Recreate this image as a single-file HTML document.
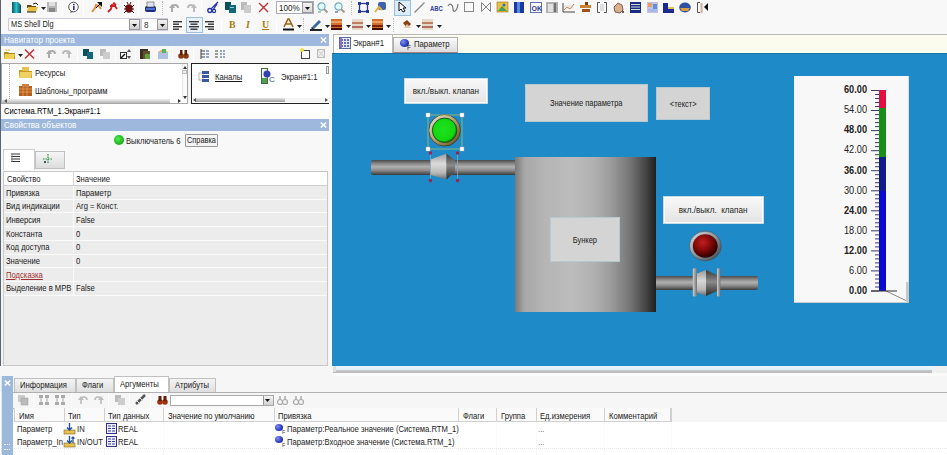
<!DOCTYPE html>
<html><head><meta charset="utf-8">
<style>
*{margin:0;padding:0;box-sizing:border-box}
html,body{width:947px;height:455px;overflow:hidden;background:#f4f4f4;font-family:"Liberation Sans",sans-serif;font-size:8.5px;color:#1a1a1a}
.a{position:absolute}
.t{position:absolute;white-space:nowrap;line-height:10px;height:10px;transform:scaleX(.9);transform-origin:0 0}
.sep{position:absolute;width:1px;background:#c8c8c8;border-right:1px solid #fff}
svg{position:absolute;overflow:visible}
</style></head><body>
<div class="a" style="left:0px;top:0px;width:947px;height:34px;background:#f8f8f8"></div>
<div class="a" style="left:0px;top:0px;width:1px;height:455px;background:#5a6470"></div>
<svg style="left:12px;top:2px" width="9" height="11" viewBox="0 0 9 11"><defs><linearGradient id="gd" x1="0" x2="1"><stop offset="0" stop-color="#0a5a6a"/><stop offset=".5" stop-color="#30c0c8"/><stop offset="1" stop-color="#0a4a5a"/></linearGradient></defs><path d="M0 0h6l3 3v8H0z" fill="url(#gd)"/></svg>
<svg style="left:27px;top:3px" width="11" height="9" viewBox="0 0 11 9"><path d="M0 2h4l1 1h4v2H0z" fill="#6a4a10"/><path d="M1 4h10l-2 5H0z" fill="#e8c040"/><path d="M0 9h9" stroke="#222"/><path d="M6 1l3-1 2 2" stroke="#222" fill="none"/></svg>
<svg style="left:41px;top:7px" width="5" height="3"><path d="M0 0h5l-2.5 3z" fill="#222"/></svg>
<svg style="left:47px;top:2px" width="10" height="10" viewBox="0 0 10 10"><rect x="0" y="0" width="10" height="10" fill="#b8b8b8"/><rect x="2" y="0" width="6" height="4" fill="#e0e0e0"/><rect x="2" y="6" width="6" height="4" fill="#888"/></svg>
<div class="sep" style="left:62px;top:1px;height:14px"></div>
<svg style="left:68px;top:2px" width="11" height="11" viewBox="0 0 11 11"><circle cx="5.5" cy="5" r="4.8" fill="#fafafa" stroke="#555" stroke-width="1"/><path d="M3 9l-1 2 3-1" fill="#555"/><rect x="5" y="4" width="1.6" height="4" fill="#3a2a90"/><circle cx="5.8" cy="2.6" r=".9" fill="#3a2a90"/></svg>
<div class="sep" style="left:83px;top:1px;height:14px"></div>
<svg style="left:90px;top:2px" width="12" height="11" viewBox="0 0 12 11"><path d="M2 10l3-4 1-3 3 1 2 3" stroke="#e09040" stroke-width="2" fill="none"/><path d="M7 0h5v5z" fill="#111"/><path d="M6 6l5-5" stroke="#111"/></svg>
<svg style="left:107px;top:2px" width="11" height="11" viewBox="0 0 11 11"><path d="M1 10l3-3 1-4 3 1 2 3M3 4h4l2-2" stroke="#cc2020" stroke-width="1.8" fill="none"/><circle cx="7" cy="1.5" r="1.3" fill="#cc2020"/></svg>
<svg style="left:124px;top:2px" width="10" height="11" viewBox="0 0 10 11"><ellipse cx="5" cy="6.5" rx="3.6" ry="4.3" fill="#701010"/><path d="M0 3l2 2M10 3l-2 2M0 7h2M8 7h2M0 11l2-2M10 11l-2-2M3 0l1 2M7 0l-1 2" stroke="#401010"/></svg>
<div class="sep" style="left:138px;top:1px;height:14px"></div>
<svg style="left:145px;top:2px" width="11" height="11" viewBox="0 0 11 11"><rect x="0" y="4" width="11" height="6" rx="2" fill="#202a80"/><rect x="2" y="0" width="7" height="5" fill="#e0e0f0" stroke="#555" stroke-width=".6"/><rect x="1" y="6" width="9" height="2" fill="#5070d0"/></svg>
<div class="a" style="left:162px;top:1px;width:1px;height:14px;border-left:1px dotted #bbb"></div>
<svg style="left:169px;top:3px" width="11" height="10" viewBox="0 0 11 10"><path d="M3 9V5a3 3 0 0 1 6 0" stroke="#aaa" stroke-width="2" fill="none"/><path d="M0 5l3-4 3 4z" fill="#aaa"/></svg>
<svg style="left:187px;top:3px" width="10" height="10" viewBox="0 0 10 10"><path d="M1 5a3 3 0 0 1 6 0v4" stroke="#bbb" stroke-width="2" fill="none"/><path d="M4 5l3-4 3 4z" fill="#bbb"/></svg>
<div class="sep" style="left:201px;top:1px;height:14px"></div>
<svg style="left:207px;top:2px" width="12" height="11" viewBox="0 0 12 11"><circle cx="2.8" cy="8.5" r="2" stroke="#2030a0" stroke-width="1.4" fill="none"/><circle cx="7" cy="9" r="1.6" stroke="#2030a0" stroke-width="1.2" fill="none"/><path d="M4 7l7-7M6 8l4-6" stroke="#2838b0" stroke-width="1.3"/></svg>
<svg style="left:225px;top:2px" width="11" height="11" viewBox="0 0 11 11"><rect x="0" y="0" width="6" height="8" fill="#0c4e5a"/><rect x="4" y="3" width="7" height="8" fill="#156878"/><rect x="5" y="5" width="4" height="1" fill="#8cd"/></svg>
<svg style="left:241px;top:2px" width="10" height="11" viewBox="0 0 10 11"><rect x="0" y="0" width="6" height="8" fill="#bbb"/><rect x="3" y="3" width="7" height="8" fill="#ccc"/></svg>
<svg style="left:258px;top:2px" width="11" height="11" viewBox="0 0 11 11"><path d="M1 1l9 9M10 1L1 10" stroke="#c03030" stroke-width="1.4"/></svg>
<div class="sep" style="left:273px;top:1px;height:14px"></div>
<div class="a" style="left:276px;top:1px;width:38px;height:13px;background:#fff;border:1px solid #aab"></div>
<div class="t" style="left:279px;top:3px;font-size:9px">100%</div>
<div class="a" style="left:302px;top:2px;width:11px;height:11px;background:linear-gradient(#f4f4f4,#d8d8d8);border:1px solid #999"></div>
<svg style="left:305px;top:7px" width="5" height="3"><path d="M0 0h5l-2.5 3z" fill="#111"/></svg>
<svg style="left:317px;top:2px" width="11" height="11" viewBox="0 0 11 11"><circle cx="4.5" cy="4.5" r="3.6" fill="#dff" stroke="#7ab" stroke-width="1.2"/><path d="M7 7l3.5 3.5" stroke="#a98" stroke-width="2"/><path d="M1 10h3" stroke="#4a8" stroke-width="1"/></svg>
<svg style="left:334px;top:2px" width="11" height="11" viewBox="0 0 11 11"><circle cx="4.5" cy="4.5" r="3.6" fill="#dff" stroke="#7ab" stroke-width="1.2"/><path d="M7 7l3.5 3.5" stroke="#a98" stroke-width="2"/><path d="M1 10h3" stroke="#257" stroke-width="1"/></svg>
<div class="a" style="left:351px;top:1px;width:1px;height:14px;border-left:1px dotted #bbb"></div>
<svg style="left:358px;top:2px" width="11" height="11" viewBox="0 0 11 11"><rect x="1.5" y="1.5" width="8" height="8" fill="none" stroke="#2a3a9a" stroke-width="1.3"/><path d="M0 0h3v3H0zM8 0h3v3H8zM0 8h3v3H0zM8 8h3v3H8z" fill="#2a3a9a"/></svg>
<svg style="left:375px;top:2px" width="11" height="11" viewBox="0 0 11 11"><rect x="3" y="0" width="8" height="8" rx="2" fill="#4060b0"/><path d="M0 10l4-5 3 3" stroke="#e0b040" stroke-width="2" fill="none"/></svg>
<div class="sep" style="left:390px;top:1px;height:14px"></div>
<div class="a" style="left:394px;top:0px;width:17px;height:16px;background:#dcecf8;border:1px solid #9cc0dc"></div>
<svg style="left:398px;top:2px" width="9" height="11" viewBox="0 0 9 11"><path d="M1 0v9l2-2 2 3 2-1-2-3h3z" fill="#fff" stroke="#111" stroke-width="1"/></svg>
<svg style="left:414px;top:2px" width="11" height="11" viewBox="0 0 11 11"><path d="M0.5 10.5l10-10" stroke="#888" stroke-width="1.2"/></svg>
<div class="t" style="left:430px;top:4px;font-size:7px;font-weight:bold;color:#3040a0;transform:scaleX(.85)">ABC</div>
<svg style="left:447px;top:2px" width="12" height="11" viewBox="0 0 12 11"><path d="M1 4c2-4 5-1 5 3s4 3 5-5" stroke="#777" stroke-width="1.2" fill="none"/></svg>
<svg style="left:464px;top:2px" width="11" height="11" viewBox="0 0 11 11"><rect x=".5" y=".5" width="9" height="9" fill="none" stroke="#888"/></svg>
<svg style="left:481px;top:2px" width="10" height="11" viewBox="0 0 10 11"><path d="M.5 .5v9l9-9v9z" fill="none" stroke="#888"/></svg>
<svg style="left:497px;top:2px" width="11" height="11" viewBox="0 0 11 11"><rect x="0" y="0" width="11" height="10" fill="#e8c040" stroke="#a07010" stroke-width=".6"/><path d="M1 9l4-5 5 5z" fill="#40a060"/><circle cx="7" cy="3" r="1.5" fill="#3070c0"/></svg>
<svg style="left:514px;top:2px" width="10" height="11" viewBox="0 0 10 11"><rect x="0" y="0" width="10" height="11" fill="#1a3aa0"/><rect x="3" y="0" width="3" height="11" fill="#5a8ae0"/></svg>
<svg style="left:530px;top:2px" width="12" height="11" viewBox="0 0 12 11"><rect x=".5" y=".5" width="11" height="10" fill="#f8f8ff" stroke="#6070b0"/><text x="1.5" y="8.5" font-size="7" font-family="Liberation Sans" font-weight="bold" fill="#3040a0">OK</text></svg>
<svg style="left:546px;top:2px" width="12" height="11" viewBox="0 0 12 11"><rect x="0" y="0" width="12" height="11" fill="#b0b0b0"/><rect x="2" y="2" width="5" height="8" fill="#e0e0e0"/><rect x="8" y="1" width="2" height="9" fill="#707070"/></svg>
<svg style="left:563px;top:2px" width="12" height="11" viewBox="0 0 12 11"><path d="M0 10h12M0 1v9" stroke="#444"/><path d="M1 8l3-3 3 2 4-5" stroke="#c07030" fill="none"/><path d="M1 6h10M1 4h10" stroke="#ccc" stroke-width=".6"/></svg>
<svg style="left:580px;top:2px" width="11" height="11" viewBox="0 0 11 11"><rect x="0" y="3" width="11" height="3" fill="#d08030"/><rect x="2" y="7" width="8" height="3" fill="#a05020"/><rect x="5" y="0" width="3" height="3" fill="#704010"/></svg>
<svg style="left:597px;top:2px" width="10" height="11" viewBox="0 0 10 11"><path d="M3 .5H.5v10H3M7 .5h2.5v10H7" stroke="#555" fill="none"/><rect x="3" y="2" width="4" height="7" fill="#ddd"/></svg>
<svg style="left:613px;top:2px" width="12" height="11" viewBox="0 0 12 11"><path d="M2 10l-1-5 4-4 4 2 1 5-3 3z" fill="#d8b090" stroke="#704030" stroke-width=".8"/><circle cx="10" cy="10" r="1" fill="#333"/></svg>
<svg style="left:630px;top:2px" width="11" height="11" viewBox="0 0 11 11"><rect x="0" y="0" width="11" height="11" fill="#1a2a80"/><path d="M1 2.5h9M1 5h9M1 7.5h9" stroke="#cdd" stroke-width="1"/></svg>
<svg style="left:647px;top:2px" width="11" height="11" viewBox="0 0 11 11"><rect x="0" y="0" width="11" height="11" fill="#c8c0e0"/><rect x="1" y="1" width="4" height="4" fill="#e8a060"/><rect x="6" y="2" width="4" height="6" fill="#6090e0"/><rect x="1" y="7" width="9" height="3" fill="#a8b8e8"/></svg>
<svg style="left:663px;top:2px" width="12" height="11" viewBox="0 0 12 11"><path d="M0 1h5v4h6v6H0z" fill="#1a2a90"/><path d="M5 5h6v2H5z" fill="#e0c050"/></svg>
<svg style="left:679px;top:2px" width="12" height="11" viewBox="0 0 12 11"><ellipse cx="6" cy="5.5" rx="5.8" ry="5" fill="#3050a0"/><path d="M1 6h10l-2 3H3z" fill="#d8a040"/></svg>
<svg style="left:697px;top:2px" width="11" height="11" viewBox="0 0 11 11"><path d="M3 .5H.5v10H3" stroke="#555" fill="none"/><path d="M5 1v10M4 1v10" stroke="#c87" stroke-width=".8"/><path d="M11 1L7 5l4 4z" fill="#111"/></svg>
<div class="a" style="left:8px;top:18px;width:133px;height:13px;background:#fff;border:1px solid #ccd"></div>
<div class="t" style="left:11px;top:20px;font-size:8.2px;color:#222">MS Shell Dlg</div>
<div class="a" style="left:129px;top:19px;width:11px;height:11px;background:linear-gradient(#f4f4f4,#d0d0d0);border:1px solid #999"></div>
<svg style="left:132px;top:24px" width="5" height="3"><path d="M0 0h5l-2.5 3z" fill="#111"/></svg>
<div class="a" style="left:141px;top:18px;width:27px;height:13px;background:#fff;border:1px solid #ccd"></div>
<div class="t" style="left:144px;top:20px;font-size:9px;color:#333">8</div>
<div class="a" style="left:157px;top:19px;width:11px;height:11px;background:linear-gradient(#f4f4f4,#d0d0d0);border:1px solid #999"></div>
<svg style="left:160px;top:24px" width="5" height="3"><path d="M0 0h5l-2.5 3z" fill="#111"/></svg>
<svg style="left:173px;top:20px" width="10" height="11" viewBox="0 0 10 11"><rect x="0" y="1.0" width="9" height="1.4" fill="#333"/><rect x="0" y="3.5" width="6" height="1.4" fill="#333"/><rect x="0" y="6.0" width="9" height="1.4" fill="#333"/><rect x="0" y="8.5" width="6" height="1.4" fill="#333"/></svg>
<div class="a" style="left:186px;top:17px;width:17px;height:16px;background:#e8f2fa;border:1px solid #9cc0dc"></div>
<svg style="left:189px;top:20px" width="10" height="11" viewBox="0 0 10 11"><rect x="0" y="1.0" width="10" height="1.4" fill="#333"/><rect x="1.5" y="3.5" width="7" height="1.4" fill="#333"/><rect x="0" y="6.0" width="10" height="1.4" fill="#333"/><rect x="1.5" y="8.5" width="7" height="1.4" fill="#333"/></svg>
<svg style="left:205px;top:20px" width="10" height="11" viewBox="0 0 10 11"><rect x="0" y="1.0" width="9" height="1.4" fill="#333"/><rect x="3" y="3.5" width="6" height="1.4" fill="#333"/><rect x="0" y="6.0" width="9" height="1.4" fill="#333"/><rect x="3" y="8.5" width="6" height="1.4" fill="#333"/></svg>
<div class="sep" style="left:221px;top:18px;height:14px"></div>
<div class="t" style="left:229px;top:19px;font-size:11px;font-weight:bold;color:#b07810;font-family:'Liberation Serif'">B</div>
<div class="t" style="left:246px;top:19px;font-size:11px;font-weight:bold;font-style:italic;color:#b07810;font-family:'Liberation Serif'">I</div>
<div class="t" style="left:262px;top:19px;font-size:11px;font-weight:bold;color:#b07810;font-family:'Liberation Serif';text-decoration:underline">U</div>
<div class="sep" style="left:276px;top:18px;height:14px"></div>
<svg style="left:283px;top:19px" width="11" height="12" viewBox="0 0 11 12"><path d="M1 8L5 0h1l4 8M3 5h5" stroke="#a06010" stroke-width="1.6" fill="none"/><rect x="0" y="9.5" width="11" height="2" fill="#111"/></svg>
<svg style="left:297px;top:25px" width="5" height="3"><path d="M0 0h5l-2.5 3z" fill="#222"/></svg>
<div class="a" style="left:303px;top:18px;width:1px;height:14px;border-left:1px dotted #bbb"></div>
<svg style="left:310px;top:19px" width="12" height="12" viewBox="0 0 12 12"><path d="M2 8l7-7 2 2-7 7z" fill="#3a6aa0"/><path d="M1 9l1-1 2 2-2 0z" fill="#222"/><rect x="0" y="10" width="12" height="2" fill="#222"/></svg>
<svg style="left:325px;top:25px" width="5" height="3"><path d="M0 0h5l-2.5 3z" fill="#222"/></svg>
<svg style="left:331px;top:19px" width="11" height="11" viewBox="0 0 11 11"><rect x="0" y="0" width="11" height="11" fill="#d07030"/><rect x="0" y="2" width="11" height="2" fill="#f0a060"/><rect x="0" y="6" width="11" height="2" fill="#802010"/><rect x="0" y="9" width="11" height="2" fill="#401008"/></svg>
<svg style="left:346px;top:25px" width="5" height="3"><path d="M0 0h5l-2.5 3z" fill="#222"/></svg>
<svg style="left:352px;top:19px" width="11" height="11" viewBox="0 0 11 11"><rect x="0" y="0" width="11" height="11" fill="#e8d8c8"/><rect x="0" y="3" width="11" height="2" fill="#c08060"/><rect x="0" y="7" width="11" height="2" fill="#b07060"/></svg>
<svg style="left:366px;top:25px" width="5" height="3"><path d="M0 0h5l-2.5 3z" fill="#222"/></svg>
<svg style="left:372px;top:19px" width="11" height="11" viewBox="0 0 11 11"><rect x="0" y="0" width="11" height="11" fill="#d07030"/><rect x="0" y="2" width="11" height="2" fill="#f0a060"/><rect x="0" y="6" width="11" height="2" fill="#802010"/><rect x="0" y="9" width="11" height="2" fill="#401008"/></svg>
<svg style="left:386px;top:25px" width="5" height="3"><path d="M0 0h5l-2.5 3z" fill="#222"/></svg>
<div class="a" style="left:393px;top:18px;width:1px;height:14px;border-left:1px dotted #bbb"></div>
<svg style="left:402px;top:19px" width="10" height="11" viewBox="0 0 10 11"><path d="M1 4l4-3 4 4-4 4z" fill="#8a4010"/><path d="M5 5l4 4H2z" fill="#e8c8a0"/></svg>
<svg style="left:416px;top:25px" width="5" height="3"><path d="M0 0h5l-2.5 3z" fill="#222"/></svg>
<svg style="left:422px;top:19px" width="11" height="11" viewBox="0 0 11 11"><rect x="0" y="0" width="11" height="11" fill="#e8d8c8"/><rect x="0" y="3" width="11" height="2" fill="#c08060"/><rect x="0" y="7" width="11" height="2" fill="#b07060"/></svg>
<svg style="left:437px;top:25px" width="5" height="3"><path d="M0 0h5l-2.5 3z" fill="#222"/></svg>
<div class="a" style="left:1px;top:34px;width:328px;height:12px;background:#9db8dc"></div>
<div class="t" style="left:4px;top:35px;color:#fff;font-size:9px">Навигатор проекта</div>
<svg style="left:320px;top:37px" width="7" height="6" viewBox="0 0 7 6"><path d="M.8 .5l5.4 5M6.2 .5L.8 5.5" stroke="#fff" stroke-width="1.6"/></svg>
<div class="a" style="left:1px;top:46px;width:328px;height:17px;background:#f6f6f6"></div>
<svg style="left:4px;top:49px" width="11" height="10" viewBox="0 0 11 10"><path d="M0 3h4l1 1h6v6H0z" fill="#b08820"/><path d="M1 5h10l-1 5H0z" fill="#f0d050"/><path d="M2 0l1 2M5 0v2" stroke="#e0c000"/></svg>
<svg style="left:18px;top:54px" width="5" height="3"><path d="M0 0h5l-2.5 3z" fill="#222"/></svg>
<svg style="left:24px;top:49px" width="11" height="10" viewBox="0 0 11 10"><path d="M1 .5l9 9M10 .5l-9 9" stroke="#c03030" stroke-width="1.4"/></svg>
<div class="sep" style="left:39px;top:47px;height:14px"></div>
<svg style="left:46px;top:49px" width="10" height="10" viewBox="0 0 10 10"><path d="M3 9V5a3 3 0 0 1 6 0" stroke="#aaa" stroke-width="2" fill="none"/><path d="M0 5l3-4 3 4z" fill="#aaa"/></svg>
<svg style="left:62px;top:49px" width="10" height="10" viewBox="0 0 10 10"><path d="M1 5a3 3 0 0 1 6 0v4" stroke="#bbb" stroke-width="2" fill="none"/><path d="M4 5l3-4 3 4z" fill="#bbb"/></svg>
<div class="sep" style="left:77px;top:47px;height:14px"></div>
<svg style="left:83px;top:49px" width="10" height="10" viewBox="0 0 10 10"><rect x="0" y="0" width="6" height="7" fill="#0c4e5a"/><rect x="4" y="3" width="6" height="7" fill="#156878"/></svg>
<svg style="left:100px;top:49px" width="10" height="10" viewBox="0 0 10 10"><rect x="0" y="0" width="6" height="7" fill="#bbb"/><rect x="3" y="3" width="7" height="7" fill="#ccc"/></svg>
<div class="sep" style="left:115px;top:47px;height:14px"></div>
<svg style="left:120px;top:49px" width="11" height="10" viewBox="0 0 11 10"><rect x=".5" y="3.5" width="6" height="6" fill="#fff" stroke="#333"/><path d="M1 9l4-4" stroke="#111" stroke-width="1.5"/><path d="M9 0l-2 3h4zM9 10l-2-3h4z" fill="#555"/></svg>
<div class="sep" style="left:135px;top:47px;height:14px"></div>
<svg style="left:140px;top:49px" width="11" height="10" viewBox="0 0 11 10"><rect x="0" y="0" width="8" height="10" fill="#3a3020"/><rect x="3" y="2" width="7" height="8" fill="#605030"/><rect x="5" y="5" width="5" height="5" fill="#60a040"/></svg>
<svg style="left:158px;top:49px" width="10" height="10" viewBox="0 0 10 10"><rect x="0" y="3" width="10" height="7" fill="#b0c0e0"/><path d="M0 3l5-3 5 3z" fill="#e0b050"/><rect x="4" y="0" width="4" height="4" fill="#60b060"/></svg>
<div class="sep" style="left:172px;top:47px;height:14px"></div>
<svg style="left:178px;top:49px" width="11" height="10" viewBox="0 0 11 10"><circle cx="3" cy="7" r="2.8" fill="#8a3a10"/><circle cx="8" cy="7" r="2.8" fill="#8a3a10"/><rect x="2" y="1" width="2.5" height="5" fill="#5a2008"/><rect x="6.5" y="1" width="2.5" height="5" fill="#5a2008"/></svg>
<div class="sep" style="left:193px;top:47px;height:14px"></div>
<svg style="left:200px;top:49px" width="9" height="10" viewBox="0 0 9 10"><path d="M1 0v10M1 2h4M1 5h4M1 8h4" stroke="#444"/><path d="M6 2h3M6 5h3M6 8h3" stroke="#3050a0"/></svg>
<svg style="left:215px;top:49px" width="11" height="10" viewBox="0 0 11 10"><path d="M0 2h3M0 5h3M0 8h3" stroke="#444"/><path d="M5 2h6M5 5h6M5 8h6" stroke="#3050a0" stroke-dasharray="2 1"/></svg>
<svg style="left:300px;top:48px" width="10" height="11" viewBox="0 0 10 11"><rect x="1.5" y="2.5" width="8" height="8" fill="#fff" stroke="#444"/><circle cx="2" cy="2" r="2" fill="#f0e040"/></svg>
<svg style="left:317px;top:49px" width="8" height="9" viewBox="0 0 8 9"><rect x=".5" y=".5" width="7" height="8" fill="#eee" stroke="#bbb"/><path d="M1 1l6 7M7 1L1 8" stroke="#ccc"/></svg>
<div class="a" style="left:1px;top:63px;width:187px;height:41px;background:#fff;border:1px solid #a8a8a8"></div>
<div class="a" style="left:9px;top:64px;width:1px;height:35px;border-left:1px dotted #aaa"></div>
<div class="a" style="left:182px;top:64px;width:5px;height:35px;background:#fafafa;border-left:1px solid #e8e8e8"></div>
<div class="a" style="left:182px;top:70px;width:5px;height:4px;background:#f0f0f0;border:1px solid #bbb"></div>
<svg style="left:183px;top:66px" width="4" height="3" viewBox="0 0 4 3"><path d="M0 3h4L2 0z" fill="#333"/></svg>
<svg style="left:183px;top:96px" width="4" height="3" viewBox="0 0 4 3"><path d="M0 0h4L2 3z" fill="#333"/></svg>
<div class="a" style="left:2px;top:99px;width:168px;height:4px;background:linear-gradient(#f0f0f0,#b8b8b8)"></div>
<svg style="left:178px;top:99px" width="3" height="4" viewBox="0 0 3 4"><path d="M0 0v4l3-2z" fill="#333"/></svg>
<svg style="left:4px;top:99px" width="3" height="4" viewBox="0 0 3 4"><path d="M3 0v4L0 2z" fill="#555"/></svg>
<svg style="left:19px;top:67px" width="13" height="11" viewBox="0 0 13 11"><path d="M0 3h5l1 1h7v7H0z" fill="#c89820"/><path d="M1 5h12l-1 6H0z" fill="#f0d060"/><rect x="3" y="0" width="7" height="4" fill="#e8c050"/></svg>
<div class="t" style="left:35px;top:68px;">Ресурсы</div>
<svg style="left:19px;top:84px" width="13" height="12" viewBox="0 0 13 12"><rect x="0" y="2" width="13" height="10" fill="#b06020"/><path d="M0 5h13M0 8h13M4 2v10M8 2v10" stroke="#f0a050" stroke-width=".8"/><rect x="3" y="0" width="7" height="3" fill="#d08040"/></svg>
<div class="t" style="left:35px;top:86px;">Шаблоны_программ</div>
<div class="a" style="left:191px;top:63px;width:139px;height:41px;background:#fff;border:1.5px solid #222"></div>
<svg style="left:199px;top:71px" width="11" height="11" viewBox="0 0 11 11"><rect x="0" y="2" width="4" height="7" fill="#fff" stroke="#888" stroke-width=".6"/><rect x="3" y="0" width="7" height="3" fill="#3a5aa0"/><rect x="3" y="4" width="7" height="3" fill="#3a5aa0"/><rect x="3" y="8" width="7" height="3" fill="#3a5aa0"/></svg>
<div class="t" style="left:215px;top:72px;text-decoration:underline">Каналы</div>
<svg style="left:261px;top:68px" width="14" height="17" viewBox="0 0 14 17"><rect x=".5" y=".5" width="6" height="15" fill="#f0f0f0" stroke="#3a6a40"/><circle cx="6" cy="6" r="3.5" fill="#3040b0"/><rect x="1" y="10" width="5" height="5" fill="#50a050"/><text x="8" y="14" font-size="8" font-family="Liberation Sans" fill="#3050a0">C</text></svg>
<div class="t" style="left:281px;top:72px;">Экран#1:1</div>
<div class="a" style="left:326px;top:66px;width:3px;height:8px;background:#eee;border:1px solid #999"></div>
<div class="a" style="left:193px;top:98px;width:135px;height:4px;background:#f4f4f4"></div>
<div class="a" style="left:195px;top:98px;width:90px;height:4px;background:linear-gradient(#e8e8e8,#9a9a9a)"></div>
<svg style="left:193px;top:98px" width="3" height="4" viewBox="0 0 3 4"><path d="M3 0v4L0 2z" fill="#555"/></svg>
<svg style="left:325px;top:98px" width="3" height="4" viewBox="0 0 3 4"><path d="M0 0v4l3-2z" fill="#555"/></svg>
<div class="a" style="left:1px;top:104px;width:328px;height:15px;background:#fff"></div>
<div class="t" style="left:4px;top:106px;color:#000">Система.RTM_1.Экран#1:1</div>
<div class="a" style="left:1px;top:119px;width:328px;height:12px;background:#9db8dc"></div>
<div class="t" style="left:4px;top:120px;color:#fff;font-size:9px">Свойства объектов</div>
<svg style="left:320px;top:122px" width="7" height="6" viewBox="0 0 7 6"><path d="M.8 .5l5.4 5M6.2 .5L.8 5.5" stroke="#fff" stroke-width="1.6"/></svg>
<div class="a" style="left:1px;top:131px;width:328px;height:40px;background:#f8f8f8"></div>
<div class="a" style="left:114px;top:135px;width:10px;height:10px;border-radius:50%;background:radial-gradient(circle at 40% 40%,#50f050,#18a818 70%,#207020)"></div>
<div class="t" style="left:126px;top:136px;">Выключатель 6</div>
<div class="a" style="left:185px;top:134px;width:33px;height:13px;background:#f4f4f4;border:1px solid #999;border-radius:1px"></div>
<div class="t" style="left:186.5px;top:136px;font-size:8.2px">Справка</div>
<div class="a" style="left:3px;top:149px;width:32px;height:21px;background:#fff;border:1px solid #ccc;border-bottom:none"></div>
<svg style="left:11px;top:153px" width="9" height="10" viewBox="0 0 9 10"><path d="M0 1h9M0 3.5h9M0 6h9M0 8.5h9" stroke="#333" stroke-width="1"/><path d="M1 1v8" stroke="#888"/></svg>
<div class="a" style="left:35px;top:151px;width:30px;height:18px;background:linear-gradient(#f6f6f6,#dcdcdc);border:1px solid #c0c0c0"></div>
<svg style="left:43px;top:154px" width="10" height="10" viewBox="0 0 10 10"><path d="M0 5h10M5 0v10" stroke="#2a8a3a" stroke-width="1.2" stroke-dasharray="1.5 1"/><circle cx="2" cy="8" r="1" fill="#222"/></svg>
<div class="a" style="left:3px;top:171px;width:325px;height:195px;background:#ececec;border:1px solid #c8c8c8"></div>
<div class="a" style="left:4px;top:172px;width:323px;height:14px;background:#fff;border-bottom:1px solid #d0d0d0"></div>
<div class="a" style="left:73px;top:171px;width:1px;height:15px;background:#d8d8d8"></div>
<div class="t" style="left:7px;top:174px;">Свойство</div>
<div class="t" style="left:76px;top:174px;">Значение</div>
<div class="a" style="left:4px;top:198.7px;width:323px;height:1px;background:#fbfbfb"></div>
<div class="a" style="left:73px;top:186.0px;width:1px;height:13px;background:#fbfbfb"></div>
<div class="t" style="left:6px;top:187.5px;">Привязка</div>
<div class="t" style="left:76px;top:187.5px;">Параметр</div>
<div class="a" style="left:4px;top:212.4px;width:323px;height:1px;background:#fbfbfb"></div>
<div class="a" style="left:73px;top:199.7px;width:1px;height:13px;background:#fbfbfb"></div>
<div class="t" style="left:6px;top:201.2px;">Вид индикации</div>
<div class="t" style="left:76px;top:201.2px;">Arg = Конст.</div>
<div class="a" style="left:4px;top:226.1px;width:323px;height:1px;background:#fbfbfb"></div>
<div class="a" style="left:73px;top:213.4px;width:1px;height:13px;background:#fbfbfb"></div>
<div class="t" style="left:6px;top:214.9px;">Инверсия</div>
<div class="t" style="left:76px;top:214.9px;">False</div>
<div class="a" style="left:4px;top:239.8px;width:323px;height:1px;background:#fbfbfb"></div>
<div class="a" style="left:73px;top:227.1px;width:1px;height:13px;background:#fbfbfb"></div>
<div class="t" style="left:6px;top:228.6px;">Константа</div>
<div class="t" style="left:76px;top:228.6px;">0</div>
<div class="a" style="left:4px;top:253.5px;width:323px;height:1px;background:#fbfbfb"></div>
<div class="a" style="left:73px;top:240.8px;width:1px;height:13px;background:#fbfbfb"></div>
<div class="t" style="left:6px;top:242.3px;">Код доступа</div>
<div class="t" style="left:76px;top:242.3px;">0</div>
<div class="a" style="left:4px;top:267.2px;width:323px;height:1px;background:#fbfbfb"></div>
<div class="a" style="left:73px;top:254.5px;width:1px;height:13px;background:#fbfbfb"></div>
<div class="t" style="left:6px;top:256.0px;">Значение</div>
<div class="t" style="left:76px;top:256.0px;">0</div>
<div class="a" style="left:4px;top:280.9px;width:323px;height:1px;background:#fbfbfb"></div>
<div class="a" style="left:73px;top:268.2px;width:1px;height:13px;background:#fbfbfb"></div>
<div class="t" style="left:6px;top:269.7px;color:#a03030;text-decoration:underline">Подсказка</div>
<div class="t" style="left:76px;top:269.7px;"></div>
<div class="a" style="left:4px;top:294.6px;width:323px;height:1px;background:#fbfbfb"></div>
<div class="a" style="left:73px;top:281.9px;width:1px;height:13px;background:#fbfbfb"></div>
<div class="t" style="left:6px;top:283.4px;">Выделение в МРВ</div>
<div class="t" style="left:76px;top:283.4px;">False</div>
<div class="a" style="left:329px;top:34px;width:4px;height:340px;background:#f8f8f8"></div>
<div class="a" style="left:333px;top:34px;width:614px;height:20px;background:#fbfcee;border-top:1px solid #b8b8b8"></div>
<div class="a" style="left:333px;top:34px;width:60px;height:20px;background:#fff;border:1px solid #b8b8b8;border-bottom:none"></div>
<svg style="left:339px;top:37px" width="12" height="12" viewBox="0 0 12 12"><rect x=".5" y=".5" width="11" height="11" fill="#e8e8f8" stroke="#5a6aa0"/><path d="M2 3h8M2 6h8M2 9h8" stroke="#3a4a90" stroke-dasharray="2 1" stroke-width="1.4"/><rect x="1" y="1" width="2" height="10" fill="#9070c0"/></svg>
<div class="t" style="left:353px;top:37.5px;font-size:8.8px;color:#222">Экран#1</div>
<div class="a" style="left:393px;top:37px;width:65px;height:16px;background:linear-gradient(#fafafa,#dcdcdc);border:1px solid #b0b0b0;border-bottom:1px solid #b08080"></div>
<div class="a" style="left:400px;top:39px;width:9px;height:7.5px;border-radius:50%;background:radial-gradient(circle at 35% 35%,#8090f0,#2838c0 60%,#101870)"></div>
<div class="t" style="left:407px;top:43px;font-size:7px;color:#222">F</div>
<div class="t" style="left:414px;top:38.5px;font-size:8.6px;color:#222">Параметр</div>
<div class="a" style="left:332px;top:53px;width:615px;height:313px;background:#1e8ac8;border-top:1px solid #1a74a8"></div>
<div class="a" style="left:332px;top:366px;width:615px;height:7px;background:linear-gradient(#e8f8fc 0,#e0f0f4 50%,#c8c8c8 60%,#b8b8b8 100%)"></div>
<div class="a" style="left:932px;top:366px;width:15px;height:7px;background:#f0f0f0"></div>
<div class="a" style="left:333px;top:366px;width:3px;height:6px;background:#ddd"></div>
<div class="a" style="left:329px;top:373px;width:618px;height:19px;background:#fafafa"></div>
<div class="a" style="left:0px;top:366px;width:333px;height:10px;background:#f6f6f6"></div>
<div class="a" style="left:404px;top:78px;width:84px;height:26px;background:linear-gradient(#f8f8f8,#e4e4e4);border:1px solid #c8dce8;box-shadow:inset 0 0 0 1px #fff"></div>
<div class="a" style="left:404px;top:78px;width:84px;height:26px;display:flex;align-items:center;justify-content:center"><span style="font-size:9px;color:#222;white-space:nowrap;transform:scaleX(.9)">вкл./выкл. клапан</span></div>
<div class="a" style="left:663px;top:196px;width:101px;height:28px;background:linear-gradient(#f8f8f8,#e4e4e4);border:1px solid #c8dce8;box-shadow:inset 0 0 0 1px #fff"></div>
<div class="a" style="left:663px;top:196px;width:101px;height:28px;display:flex;align-items:center;justify-content:center"><span style="font-size:9px;color:#222;white-space:nowrap;transform:scaleX(.9)">вкл./выкл.&nbsp; клапан</span></div>
<div class="a" style="left:525px;top:84px;width:123px;height:38px;background:#d4d4d4;border:1px solid #b8c8d0"></div>
<div class="a" style="left:525px;top:84px;width:123px;height:38px;display:flex;align-items:center;justify-content:center"><span style="font-size:8.5px;color:#222;white-space:nowrap;transform:scaleX(.88)">Значение параметра</span></div>
<div class="a" style="left:656px;top:87px;width:54px;height:33px;background:#d4d4d4;border:1px solid #b8c8d0"></div>
<div class="a" style="left:656px;top:87px;width:54px;height:33px;display:flex;align-items:center;justify-content:center"><span style="font-size:8.5px;color:#222;white-space:nowrap;transform:scaleX(.88)">&lt;текст&gt;</span></div>
<div class="a" style="left:371px;top:160px;width:146px;height:15px;background:linear-gradient(#4a4a4a 0%,#8a8a8a 25%,#b0b0b0 45%,#8a8a8a 70%,#3a3a3a 100%);border-radius:2px"></div>
<div class="a" style="left:652px;top:276px;width:106px;height:14px;background:linear-gradient(#4a4a4a 0%,#8a8a8a 25%,#b0b0b0 45%,#8a8a8a 70%,#3a3a3a 100%);border-radius:2px"></div>
<div class="a" style="left:515px;top:157px;width:141px;height:155px;background:linear-gradient(90deg,#7a7a7a 0%,#a8a8a8 7%,#b4b4b4 20%,#bcbcbc 40%,#b2b2b2 55%,#9c9c9c 68%,#747474 82%,#444 93%,#1e1e1e 100%)"></div>
<div class="a" style="left:550px;top:217px;width:70px;height:45px;background:#d4d4d4;border:1px solid #b8c8d0"></div>
<div class="a" style="left:550px;top:217px;width:70px;height:45px;display:flex;align-items:center;justify-content:center"><span style="font-size:8.5px;color:#222;white-space:nowrap;transform:scaleX(.88)">Бункер</span></div>
<svg style="left:424px;top:145px" width="40" height="40" viewBox="0 0 40 40"><defs><linearGradient id="vl" x1="0" x2="0" y1="0" y2="1"><stop offset="0" stop-color="#9a9a9a"/><stop offset=".4" stop-color="#dcdcdc"/><stop offset=".75" stop-color="#b8b8b8"/><stop offset="1" stop-color="#6a6a6a"/></linearGradient>
<linearGradient id="vr" x1="0" x2="0" y1="0" y2="1"><stop offset="0" stop-color="#3a3a3a"/><stop offset=".45" stop-color="#8a8a8a"/><stop offset="1" stop-color="#2a2a2a"/></linearGradient></defs>
<path d="M6.5 14.5L22.5 8.5V34.5L6.5 30z" fill="url(#vl)"/>
<path d="M22.5 8.5L31 15.5V26.5L22.5 34.5z" fill="url(#vr)"/>
<path d="M6.5 8v27.5M33.5 8v27.5" stroke="#8ab" stroke-width=".8"/>
<circle cx="6.5" cy="8" r="1.7" fill="#a02048"/><circle cx="33.5" cy="8" r="1.7" fill="#a02048"/><circle cx="6.5" cy="35.5" r="1.7" fill="#a02048"/><circle cx="33.5" cy="35.5" r="1.7" fill="#a02048"/></svg>
<svg style="left:424px;top:111px" width="42" height="42" viewBox="0 0 42 42"><defs><linearGradient id="rg" x1="0" y1="0" x2="1" y2="1"><stop offset="0" stop-color="#e8e8e0"/><stop offset=".45" stop-color="#b8a878"/><stop offset=".8" stop-color="#806838"/><stop offset="1" stop-color="#403018"/></linearGradient>
<radialGradient id="gg" cx=".45" cy=".45" r=".55"><stop offset="0" stop-color="#20e020"/><stop offset=".85" stop-color="#10d810"/><stop offset="1" stop-color="#0a7a0a"/></radialGradient></defs>
<circle cx="20.6" cy="19.3" r="15.8" fill="url(#rg)" stroke="#3a3a28" stroke-width=".8"/>
<circle cx="20.6" cy="19.3" r="12.2" fill="url(#gg)" stroke="#205020" stroke-width="1"/>
<rect x="4" y="4" width="34" height="34" fill="none" stroke="#b8c860" stroke-width=".7"/>
<rect x="2" y="2" width="4" height="4" fill="#fff" stroke="#aaa" stroke-width=".4"/><rect x="36" y="2" width="4" height="4" fill="#fff" stroke="#aaa" stroke-width=".4"/>
<rect x="2" y="36" width="4" height="4" fill="#fff" stroke="#aaa" stroke-width=".4"/><rect x="36" y="36" width="4" height="4" fill="#fff" stroke="#aaa" stroke-width=".4"/></svg>
<svg style="left:685px;top:226px" width="40" height="40" viewBox="0 0 40 40"><defs><linearGradient id="rr" x1="0" y1="0" x2="1" y2="1"><stop offset="0" stop-color="#dde4ea"/><stop offset=".5" stop-color="#8a949c"/><stop offset="1" stop-color="#3a4048"/></linearGradient>
<radialGradient id="rd" cx=".4" cy=".35" r=".65"><stop offset="0" stop-color="#c02020"/><stop offset=".55" stop-color="#800808"/><stop offset="1" stop-color="#280000"/></radialGradient></defs>
<ellipse cx="20.3" cy="20" rx="15.9" ry="14.8" fill="url(#rr)" stroke="#404850" stroke-width=".6"/><ellipse cx="20.2" cy="20" rx="12.4" ry="11.8" fill="url(#rd)"/></svg>
<svg style="left:688px;top:262px" width="40" height="40" viewBox="0 0 40 40"><defs><linearGradient id="vl2" x1="0" x2="0" y1="0" y2="1"><stop offset="0" stop-color="#9a9a9a"/><stop offset=".4" stop-color="#d8d8d8"/><stop offset=".75" stop-color="#b8b8b8"/><stop offset="1" stop-color="#6a6a6a"/></linearGradient>
<linearGradient id="vr2" x1="0" x2="0" y1="0" y2="1"><stop offset="0" stop-color="#3a3a3a"/><stop offset=".45" stop-color="#8a8a8a"/><stop offset="1" stop-color="#2a2a2a"/></linearGradient>
<linearGradient id="fl" x1="0" x2="1"><stop offset="0" stop-color="#d0d0d0"/><stop offset="1" stop-color="#707070"/></linearGradient></defs>
<path d="M9 11.5L18 8V34L9 30.5z" fill="url(#vl2)"/>
<path d="M18 8L29 13V29L18 34z" fill="url(#vr2)"/>
<rect x="4.8" y="6.2" width="4.2" height="28.3" rx="1" fill="url(#fl)"/><rect x="29" y="6.2" width="3.4" height="28.3" rx="1" fill="url(#fl)"/></svg>
<div class="a" style="left:794px;top:76px;width:115px;height:227px;background:#f8f8f8;border-right:1px solid #ddd;border-bottom:1px solid #ccc"></div>
<div class="a" style="left:879px;top:90px;width:7px;height:18px;background:#e01040"></div>
<div class="a" style="left:879px;top:108px;width:7px;height:49px;background:#189018"></div>
<div class="a" style="left:879px;top:157px;width:7px;height:134px;background:#0a0ad0"></div>
<div class="a" style="left:879px;top:157px;width:7px;height:34px;background:#101c88"></div>
<svg style="left:0px;top:0px" width="947" height="455" viewBox="0 0 947 455"><path d="M871 90.5h8" stroke="#3a3a6a" stroke-width="1"/><path d="M875 94.5h4" stroke="#3a3a6a" stroke-width="1"/><path d="M875 98.5h4" stroke="#3a3a6a" stroke-width="1"/><path d="M875 102.5h4" stroke="#3a3a6a" stroke-width="1"/><path d="M875 106.5h4" stroke="#3a3a6a" stroke-width="1"/><path d="M871 110.5h8" stroke="#3a3a6a" stroke-width="1"/><path d="M875 114.6h4" stroke="#3a3a6a" stroke-width="1"/><path d="M875 118.6h4" stroke="#3a3a6a" stroke-width="1"/><path d="M875 122.6h4" stroke="#3a3a6a" stroke-width="1"/><path d="M875 126.6h4" stroke="#3a3a6a" stroke-width="1"/><path d="M871 130.6h8" stroke="#3a3a6a" stroke-width="1"/><path d="M875 134.6h4" stroke="#3a3a6a" stroke-width="1"/><path d="M875 138.6h4" stroke="#3a3a6a" stroke-width="1"/><path d="M875 142.6h4" stroke="#3a3a6a" stroke-width="1"/><path d="M875 146.6h4" stroke="#3a3a6a" stroke-width="1"/><path d="M871 150.7h8" stroke="#3a3a6a" stroke-width="1"/><path d="M875 154.7h4" stroke="#3a3a6a" stroke-width="1"/><path d="M875 158.7h4" stroke="#3a3a6a" stroke-width="1"/><path d="M875 162.7h4" stroke="#3a3a6a" stroke-width="1"/><path d="M875 166.7h4" stroke="#3a3a6a" stroke-width="1"/><path d="M871 170.7h8" stroke="#3a3a6a" stroke-width="1"/><path d="M875 174.7h4" stroke="#3a3a6a" stroke-width="1"/><path d="M875 178.7h4" stroke="#3a3a6a" stroke-width="1"/><path d="M875 182.7h4" stroke="#3a3a6a" stroke-width="1"/><path d="M875 186.7h4" stroke="#3a3a6a" stroke-width="1"/><path d="M871 190.8h8" stroke="#3a3a6a" stroke-width="1"/><path d="M875 194.8h4" stroke="#3a3a6a" stroke-width="1"/><path d="M875 198.8h4" stroke="#3a3a6a" stroke-width="1"/><path d="M875 202.8h4" stroke="#3a3a6a" stroke-width="1"/><path d="M875 206.8h4" stroke="#3a3a6a" stroke-width="1"/><path d="M871 210.8h8" stroke="#3a3a6a" stroke-width="1"/><path d="M875 214.8h4" stroke="#3a3a6a" stroke-width="1"/><path d="M875 218.8h4" stroke="#3a3a6a" stroke-width="1"/><path d="M875 222.8h4" stroke="#3a3a6a" stroke-width="1"/><path d="M875 226.8h4" stroke="#3a3a6a" stroke-width="1"/><path d="M871 230.8h8" stroke="#3a3a6a" stroke-width="1"/><path d="M875 234.9h4" stroke="#3a3a6a" stroke-width="1"/><path d="M875 238.9h4" stroke="#3a3a6a" stroke-width="1"/><path d="M875 242.9h4" stroke="#3a3a6a" stroke-width="1"/><path d="M875 246.9h4" stroke="#3a3a6a" stroke-width="1"/><path d="M871 250.9h8" stroke="#3a3a6a" stroke-width="1"/><path d="M875 254.9h4" stroke="#3a3a6a" stroke-width="1"/><path d="M875 258.9h4" stroke="#3a3a6a" stroke-width="1"/><path d="M875 262.9h4" stroke="#3a3a6a" stroke-width="1"/><path d="M875 266.9h4" stroke="#3a3a6a" stroke-width="1"/><path d="M871 270.9h8" stroke="#3a3a6a" stroke-width="1"/><path d="M875 275.0h4" stroke="#3a3a6a" stroke-width="1"/><path d="M875 279.0h4" stroke="#3a3a6a" stroke-width="1"/><path d="M875 283.0h4" stroke="#3a3a6a" stroke-width="1"/><path d="M875 287.0h4" stroke="#3a3a6a" stroke-width="1"/><path d="M871 291.0h8" stroke="#3a3a6a" stroke-width="1"/></svg>
<div class="t" style="left:800px;top:85.3px;width:67px;text-align:right;font-size:10px;font-weight:bold;color:#222;transform:scaleX(.92);transform-origin:100% 0">60.00</div>
<div class="t" style="left:800px;top:105.3px;width:67px;text-align:right;font-size:10px;font-weight:normal;color:#222;transform:scaleX(.92);transform-origin:100% 0">54.00</div>
<div class="t" style="left:800px;top:125.4px;width:67px;text-align:right;font-size:10px;font-weight:bold;color:#222;transform:scaleX(.92);transform-origin:100% 0">48.00</div>
<div class="t" style="left:800px;top:145.4px;width:67px;text-align:right;font-size:10px;font-weight:normal;color:#222;transform:scaleX(.92);transform-origin:100% 0">42.00</div>
<div class="t" style="left:800px;top:165.5px;width:67px;text-align:right;font-size:10px;font-weight:bold;color:#222;transform:scaleX(.92);transform-origin:100% 0">36.00</div>
<div class="t" style="left:800px;top:185.6px;width:67px;text-align:right;font-size:10px;font-weight:normal;color:#222;transform:scaleX(.92);transform-origin:100% 0">30.00</div>
<div class="t" style="left:800px;top:205.6px;width:67px;text-align:right;font-size:10px;font-weight:bold;color:#222;transform:scaleX(.92);transform-origin:100% 0">24.00</div>
<div class="t" style="left:800px;top:225.6px;width:67px;text-align:right;font-size:10px;font-weight:normal;color:#222;transform:scaleX(.92);transform-origin:100% 0">18.00</div>
<div class="t" style="left:800px;top:245.7px;width:67px;text-align:right;font-size:10px;font-weight:bold;color:#222;transform:scaleX(.92);transform-origin:100% 0">12.00</div>
<div class="t" style="left:800px;top:265.8px;width:67px;text-align:right;font-size:10px;font-weight:normal;color:#222;transform:scaleX(.92);transform-origin:100% 0">6.00</div>
<div class="t" style="left:800px;top:285.8px;width:67px;text-align:right;font-size:10px;font-weight:bold;color:#222;transform:scaleX(.92);transform-origin:100% 0">0.00</div>
<svg style="left:0px;top:0px" width="947" height="455" viewBox="0 0 947 455"><path d="M886 291L909 302" stroke="#888" stroke-width="1"/><path d="M871 291h26" stroke="#333"/><rect x="906" y="282" width="3" height="20" fill="#c8c8c8"/></svg>
<div class="a" style="left:0px;top:376px;width:947px;height:79px;background:#fff"></div>
<div class="a" style="left:0px;top:376px;width:947px;height:16px;background:#f6f6f6"></div>
<div class="a" style="left:1px;top:376px;width:12px;height:79px;background:#9cb8da;border-left:1px solid #d8e8f0"></div>
<svg style="left:4px;top:380px" width="7" height="6" viewBox="0 0 7 6"><path d="M.8 .5l5.4 5M6.2 .5L.8 5.5" stroke="#fff" stroke-width="1.6"/></svg>
<div class="a" style="left:4px;top:444px;width:6px;height:6px;border-top:1px dotted #fff;border-bottom:1px dotted #fff"></div>
<div class="a" style="left:14px;top:378px;width:62px;height:14px;background:linear-gradient(#f4f4f4,#dedede);border:1px solid #c0c0c0;border-bottom:none"></div>
<div class="t" style="left:20px;top:379.5px;">Информация</div>
<div class="a" style="left:76px;top:378px;width:38px;height:14px;background:linear-gradient(#f4f4f4,#dedede);border:1px solid #c0c0c0;border-bottom:none"></div>
<div class="t" style="left:82px;top:379.5px;">Флаги</div>
<div class="a" style="left:114px;top:376px;width:55px;height:16px;background:#fff;border:1px solid #c0c0c0;border-bottom:none"></div>
<div class="t" style="left:120px;top:379px;">Аргументы</div>
<div class="a" style="left:169px;top:378px;width:47px;height:14px;background:linear-gradient(#f4f4f4,#dedede);border:1px solid #c0c0c0;border-bottom:none"></div>
<div class="t" style="left:175px;top:379.5px;">Атрибуты</div>
<div class="a" style="left:13px;top:392px;width:934px;height:17px;background:#f6f6f6;border-top:1px solid #b0b0b0;border-bottom:1px solid #b8b8b8"></div>
<svg style="left:18px;top:395px" width="11" height="10" viewBox="0 0 11 10"><rect x="0" y="0" width="7" height="7" fill="#ccc"/><rect x="3" y="3" width="7" height="7" fill="#bbb" stroke="#999" stroke-width=".5"/></svg>
<div class="sep" style="left:33px;top:393px;height:15px"></div>
<svg style="left:39px;top:395px" width="11" height="10" viewBox="0 0 11 10"><rect x="0" y="0" width="4" height="3" fill="#aaa"/><rect x="6" y="0" width="4" height="3" fill="#aaa"/><rect x="0" y="7" width="4" height="3" fill="#aaa"/><rect x="6" y="7" width="4" height="3" fill="#aaa"/><path d="M2 3v4M8 3v4" stroke="#aaa"/></svg>
<svg style="left:55px;top:395px" width="11" height="10" viewBox="0 0 11 10"><rect x="0" y="0" width="4" height="3" fill="#aaa"/><rect x="6" y="0" width="4" height="3" fill="#aaa"/><rect x="0" y="7" width="4" height="3" fill="#aaa"/><rect x="6" y="7" width="4" height="3" fill="#aaa"/><path d="M2 3v4M8 3v4" stroke="#aaa"/></svg>
<div class="sep" style="left:71px;top:393px;height:15px"></div>
<svg style="left:78px;top:395px" width="10" height="10" viewBox="0 0 10 10"><path d="M3 9V5a3 3 0 0 1 6 0" stroke="#bbb" stroke-width="1.6" fill="none"/><path d="M0 5l3-4 3 4z" fill="#bbb"/></svg>
<svg style="left:94px;top:395px" width="10" height="10" viewBox="0 0 10 10"><path d="M1 5a3 3 0 0 1 6 0v4" stroke="#bbb" stroke-width="1.6" fill="none"/><path d="M4 5l3-4 3 4z" fill="#bbb"/></svg>
<div class="sep" style="left:108px;top:393px;height:15px"></div>
<svg style="left:115px;top:395px" width="10" height="10" viewBox="0 0 10 10"><rect x="0" y="0" width="6" height="7" fill="#bbb"/><rect x="3" y="3" width="7" height="7" fill="#ccc"/></svg>
<div class="sep" style="left:129px;top:393px;height:15px"></div>
<svg style="left:135px;top:395px" width="11" height="10" viewBox="0 0 11 10"><path d="M1 9l9-9" stroke="#555" stroke-width="2.5"/><path d="M2 6l3 3M5 3l3 3" stroke="#ddd" stroke-width="1"/></svg>
<div class="sep" style="left:150px;top:393px;height:15px"></div>
<svg style="left:157px;top:395px" width="11" height="10" viewBox="0 0 11 10"><circle cx="3" cy="7" r="2.8" fill="#a03010"/><circle cx="8" cy="7" r="2.8" fill="#a03010"/><rect x="1.5" y="1" width="3" height="5" fill="#602008"/><rect x="6.5" y="1" width="3" height="5" fill="#602008"/></svg>
<div class="a" style="left:170px;top:395px;width:104px;height:11px;background:#fff;border:1px solid #a8a8a8"></div>
<div class="a" style="left:263px;top:396px;width:10px;height:9px;background:linear-gradient(#f4f4f4,#d0d0d0);border-left:1px solid #999"></div>
<svg style="left:265px;top:399px" width="5" height="3"><path d="M0 0h5l-2.5 3z" fill="#111"/></svg>
<svg style="left:277px;top:395px" width="11" height="10" viewBox="0 0 11 10"><circle cx="3" cy="7" r="2.5" fill="none" stroke="#aaa" stroke-width="1.2"/><circle cx="8" cy="7" r="2.5" fill="none" stroke="#aaa" stroke-width="1.2"/><path d="M3 4V1M8 4V1" stroke="#aaa" stroke-width="1.5"/></svg>
<svg style="left:293px;top:395px" width="11" height="10" viewBox="0 0 11 10"><circle cx="3" cy="7" r="2.5" fill="none" stroke="#aaa" stroke-width="1.2"/><circle cx="8" cy="7" r="2.5" fill="none" stroke="#aaa" stroke-width="1.2"/><path d="M3 4V1M8 4V1" stroke="#aaa" stroke-width="1.5"/></svg>
<div class="a" style="left:14px;top:408px;width:933px;height:14px;background:#f6f6f6"></div>
<div class="a" style="left:14px;top:408px;width:657px;height:14px;background:#fafafa;border:1px solid #d0d0d0;border-top:none"></div>
<div class="a" style="left:63.6px;top:408px;width:1px;height:14px;background:#d0d0d0"></div>
<div class="a" style="left:103.7px;top:408px;width:1px;height:14px;background:#d0d0d0"></div>
<div class="a" style="left:163.4px;top:408px;width:1px;height:14px;background:#d0d0d0"></div>
<div class="a" style="left:273.6px;top:408px;width:1px;height:14px;background:#d0d0d0"></div>
<div class="a" style="left:458px;top:408px;width:1px;height:14px;background:#d0d0d0"></div>
<div class="a" style="left:496.2px;top:408px;width:1px;height:14px;background:#d0d0d0"></div>
<div class="a" style="left:535.8px;top:408px;width:1px;height:14px;background:#d0d0d0"></div>
<div class="a" style="left:604.4px;top:408px;width:1px;height:14px;background:#d0d0d0"></div>
<div class="a" style="left:671.2px;top:408px;width:1px;height:14px;background:#d0d0d0"></div>
<div class="t" style="left:18.5px;top:411px;">Имя</div>
<div class="t" style="left:68.1px;top:411px;">Тип</div>
<div class="t" style="left:108.2px;top:411px;">Тип данных</div>
<div class="t" style="left:167.9px;top:411px;">Значение по умолчанию</div>
<div class="t" style="left:278.1px;top:411px;">Привязка</div>
<div class="t" style="left:462.5px;top:411px;">Флаги</div>
<div class="t" style="left:500.7px;top:411px;">Группа</div>
<div class="t" style="left:540.3px;top:411px;">Ед.измерения</div>
<div class="t" style="left:608.9px;top:411px;">Комментарий</div>
<div class="a" style="left:14px;top:422px;width:933px;height:33px;background:#fff"></div>
<div class="a" style="left:63.6px;top:423px;width:1px;height:32px;border-left:1px dotted #f4f4f4"></div>
<div class="a" style="left:103.7px;top:423px;width:1px;height:32px;border-left:1px dotted #f4f4f4"></div>
<div class="a" style="left:163.4px;top:423px;width:1px;height:32px;border-left:1px dotted #f4f4f4"></div>
<div class="a" style="left:273.6px;top:423px;width:1px;height:32px;border-left:1px dotted #f4f4f4"></div>
<div class="a" style="left:458.0px;top:423px;width:1px;height:32px;border-left:1px dotted #f4f4f4"></div>
<div class="a" style="left:496.2px;top:423px;width:1px;height:32px;border-left:1px dotted #f4f4f4"></div>
<div class="a" style="left:535.8px;top:423px;width:1px;height:32px;border-left:1px dotted #f4f4f4"></div>
<div class="a" style="left:604.4px;top:423px;width:1px;height:32px;border-left:1px dotted #f4f4f4"></div>
<div class="a" style="left:671.2px;top:423px;width:1px;height:32px;border-left:1px dotted #f4f4f4"></div>
<div class="a" style="left:14px;top:448px;width:933px;height:1px;border-top:1px dotted #e8e8e8"></div>
<div class="t" style="left:17px;top:424.0px;">Параметр</div>
<svg style="left:64px;top:423.0px" width="11" height="11" viewBox="0 0 11 11"><rect x="0" y="7" width="11" height="4" fill="#e8c050" stroke="#806020" stroke-width=".6"/><path d="M5.5 0v7M3 4.5l2.5 2.5 2.5-2.5" stroke="#2050a0" stroke-width="1.4" fill="none"/></svg>
<div class="t" style="left:77px;top:424.0px;">IN</div>
<svg style="left:106px;top:423.0px" width="11" height="11" viewBox="0 0 11 11"><rect x=".5" y=".5" width="10" height="10" fill="#f0f0ff" stroke="#30308a"/><path d="M2 3h3M6 3h3M2 5.5h3M6 5.5h3M2 8h3M6 8h3" stroke="#3040a0" stroke-width="1.2"/></svg>
<div class="t" style="left:118px;top:424.0px;">REAL</div>
<div class="a" style="left:275px;top:423.5px;width:8px;height:7px;border-radius:50%;background:radial-gradient(circle at 35% 35%,#8090f0,#2838c0 60%,#101870)"></div>
<div class="t" style="left:281.5px;top:427.0px;font-size:6px;color:#333">F</div>
<div class="t" style="left:287px;top:424.0px;">Параметр:Реальное значение (Система.RTM_1)</div>
<div class="t" style="left:538px;top:424.0px;color:#777">...</div>
<div class="t" style="left:17px;top:436.7px;">Параметр_In</div>
<svg style="left:64px;top:435.7px" width="11" height="11" viewBox="0 0 11 11"><rect x="0" y="7" width="11" height="4" fill="#e8c050" stroke="#806020" stroke-width=".6"/><path d="M5.5 0v7M3 4.5l2.5 2.5 2.5-2.5" stroke="#2050a0" stroke-width="1.4" fill="none"/><path d="M9 7V1M7.5 2.5L9 1l1.5 1.5" stroke="#2050a0" stroke-width="1.2" fill="none"/></svg>
<div class="t" style="left:77px;top:436.7px;">IN/OUT</div>
<svg style="left:106px;top:435.7px" width="11" height="11" viewBox="0 0 11 11"><rect x=".5" y=".5" width="10" height="10" fill="#f0f0ff" stroke="#30308a"/><path d="M2 3h3M6 3h3M2 5.5h3M6 5.5h3M2 8h3M6 8h3" stroke="#3040a0" stroke-width="1.2"/></svg>
<div class="t" style="left:118px;top:436.7px;">REAL</div>
<div class="a" style="left:275px;top:436.2px;width:8px;height:7px;border-radius:50%;background:radial-gradient(circle at 35% 35%,#8090f0,#2838c0 60%,#101870)"></div>
<div class="t" style="left:281.5px;top:439.7px;font-size:6px;color:#333">F</div>
<div class="t" style="left:287px;top:436.7px;">Параметр:Входное значение (Система.RTM_1)</div>
<div class="t" style="left:538px;top:436.7px;color:#777">...</div>
</body></html>
